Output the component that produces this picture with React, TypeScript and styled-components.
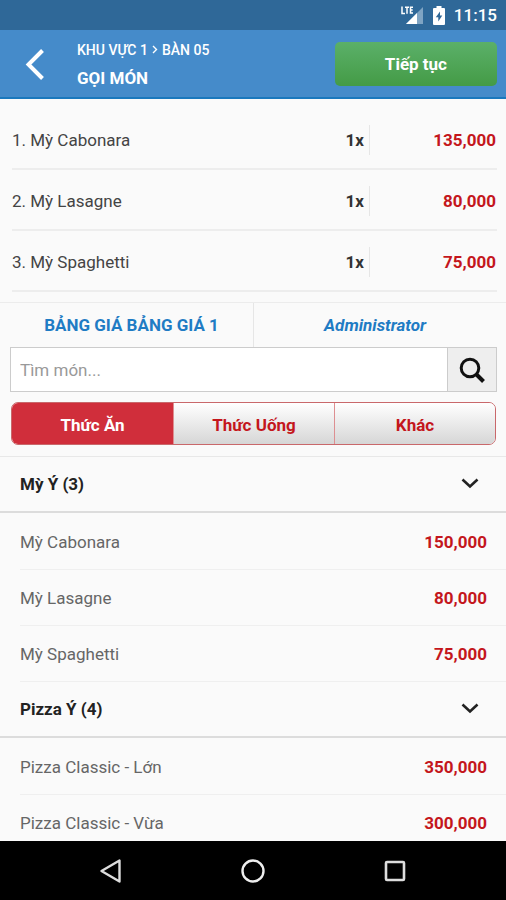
import React, { useState } from "react";
import styled, { createGlobalStyle } from "styled-components";

const GlobalStyle = createGlobalStyle`
  *, *::before, *::after { box-sizing: border-box; }
  body { margin: 0; background: #fafafa; }
  body, button, input { font-family: Roboto, "Noto Sans", sans-serif; }
  button { margin: 0; padding: 0; border: 0; background: none; cursor: pointer; }
  svg { display: block; }
`;

const Screen = styled.div`
  display: flex;
  flex-direction: column;
  height: 100vh;
  background: #fafafa;
  color: #333;
  font-size: 17px;
  line-height: 24px;
`;

const StatusBar = styled.div`
  flex: none;
  display: flex;
  align-items: center;
  justify-content: flex-end;
  height: 30px;
  padding: 0 9px;
  background: #2f6898;
  color: #fff;
`;

const StatusIcons = styled.div`
  display: flex;
  align-items: center;
  gap: 10px;
`;

const Clock = styled.time`
  margin-left: 9px;
  font-size: 17px;
  font-weight: 500;
  line-height: 30px;
`;

const Header = styled.header`
  flex: none;
  display: flex;
  align-items: center;
  height: 69px;
  padding: 0 9px 0 20px;
  background: #458bca;
  border-bottom: 2px solid #1a78bd;
  color: #fff;
`;

const BackButton = styled.button`
  width: 57px;
  color: #fff;
`;

const Titles = styled.div`
  flex: 1;
  padding-top: 4px;
  font-weight: 700;
`;

const Trail = styled.div`
  display: flex;
  align-items: center;
  gap: 4px;
  font-size: 14px;
  font-weight: 500;
  line-height: 24px;
`;

const Title = styled.h1`
  margin: 0;
  font-size: 17px;
  font-weight: 700;
  line-height: 32px;
`;

const ContinueButton = styled.button`
  width: 34%;
  height: 44px;
  border-radius: 5px;
  background: linear-gradient(#5bb069, #449b46);
  color: #fff;
  font-size: 17px;
  font-weight: 700;
`;

const OrderList = styled.ol`
  flex: none;
  margin: 0;
  padding: 10px 9px 10px 12px;
  list-style: none;
`;

const OrderRow = styled.li`
  display: flex;
  align-items: center;
  height: 61px;
  padding-top: 2px;
  border-bottom: 2px solid #ededed;
`;

const OrderName = styled.span`
  flex: 1;
  color: #444;
`;

const Quantity = styled.span`
  padding: 3px 5px 3px 0;
  border-right: 1px solid #e6e6e6;
  color: #333;
  font-weight: 700;
`;

const Price = styled.span<{ $column?: boolean }>`
  ${(p) => (p.$column ? "width: 127px; padding-right: 1px;" : "")}
  color: #c4161c;
  font-weight: 700;
  text-align: right;
`;

const Options = styled.div`
  flex: none;
  display: grid;
  grid-template-columns: 1fr 1fr;
  height: 45px;
  border-top: 1px solid #ececec;
`;

const Option = styled.button<{ $italic?: boolean }>`
  border-left: ${(p) => (p.$italic ? "1px solid #e6e6e6" : "0")};
  padding: ${(p) => (p.$italic ? "0 10px 0 0" : "0 0 0 10px")};
  color: #1f7cc4;
  font-size: 17px;
  font-style: ${(p) => (p.$italic ? "italic" : "normal")};
  font-weight: 700;
`;

const SearchBar = styled.form`
  flex: none;
  display: flex;
  height: 45px;
  margin: 0 9px 0 10px;
  border: 1px solid #ccc;
`;

const SearchInput = styled.input`
  flex: 1;
  min-width: 0;
  padding: 0 9px;
  border: 0;
  border-radius: 0;
  outline: 0;
  background: #fff;
  color: #333;
  font-size: 17px;
  &::placeholder { color: #999; opacity: 1; }
`;

const SearchButton = styled.button`
  display: grid;
  place-items: center;
  width: 49px;
  border-left: 1px solid #ccc;
  background: #eee;
  color: #111;
`;

const Segments = styled.div`
  flex: none;
  display: grid;
  grid-template-columns: repeat(3, 1fr);
  height: 43px;
  margin: 10px 10px 11px 11px;
  border: 1px solid #c9686b;
  border-radius: 7px;
  overflow: hidden;
`;

const Segment = styled.button<{ $active: boolean }>`
  padding-top: 2px;
  background: ${(p) => (p.$active ? "#d02e3b" : "linear-gradient(#fff, #d6d6d6)")};
  color: ${(p) => (p.$active ? "#fff" : "#c4161c")};
  font-size: 17px;
  font-weight: 700;
  & + & { border-left: 1px solid #dd8f91; }
`;

const Menu = styled.main`
  flex: 1;
  min-height: 0;
  overflow-y: auto;
  scrollbar-width: none;
  border-top: 1px solid #e8e8e8;
`;

const GroupTitle = styled.h2`
  margin: 0;
`;

const GroupButton = styled.button`
  display: flex;
  align-items: center;
  justify-content: space-between;
  width: 100%;
  height: 56px;
  padding: 0 27px 0 20px;
  border-bottom: 2px solid #dcdcdc;
  color: #222;
  font-size: 17px;
  font-weight: 700;
`;

const Dishes = styled.ul`
  margin: 0;
  padding: 1px 0 0;
  list-style: none;
`;

const Dish = styled.li`
  display: flex;
  align-items: center;
  justify-content: space-between;
  height: 56px;
  margin-left: 20px;
  padding-right: 19px;
  border-bottom: 1px solid #efefef;
  color: #666;
`;

const NavBar = styled.nav`
  flex: none;
  display: flex;
  align-items: center;
  justify-content: center;
  gap: 118px;
  height: 59px;
  background: #000;
`;

const NavButton = styled.button`
  width: 24px;
  height: 24px;
`;

const order = [
  { name: "Mỳ Cabonara", price: "135,000" },
  { name: "Mỳ Lasagne", price: "80,000" },
  { name: "Mỳ Spaghetti", price: "75,000" },
];

const groups = [
  {
    title: "Mỳ Ý (3)",
    dishes: [
      { name: "Mỳ Cabonara", price: "150,000" },
      { name: "Mỳ Lasagne", price: "80,000" },
      { name: "Mỳ Spaghetti", price: "75,000" },
    ],
  },
  {
    title: "Pizza Ý (4)",
    dishes: [
      { name: "Pizza Classic - Lớn", price: "350,000" },
      { name: "Pizza Classic - Vừa", price: "300,000" },
    ],
  },
];

const kinds = ["Thức Ăn", "Thức Uống", "Khác"];

function SignalIcon() {
  return (
    <svg width="22" height="20" viewBox="0 0 22 20" fill="none" aria-hidden="true">
      <path d="M22 2v17H5z" fill="#7fa4c3" />
      <path d="M16 8v11H5z" fill="#fff" />
      <path d="M1 1.500v7h3M4 2.200h4M6 2.200v6.500M12 2.200H9.500v5.800H12M9.500 5h2.200" stroke="#fff" strokeWidth="1.500" />
    </svg>
  );
}

function BatteryIcon() {
  return (
    <svg width="12" height="19" viewBox="0 0 12 19" aria-hidden="true">
      <path d="M3.500 0h5v2H11a1 1 0 0 1 1 1v15a1 1 0 0 1-1 1H1a1 1 0 0 1-1-1V3a1 1 0 0 1 1-1h2.500z" fill="#fff" />
      <path d="M7 5.500 2.800 11.200H5.300V15.500L9.300 9.600H7z" fill="#2f6898" />
    </svg>
  );
}

function Chevron() {
  return (
    <svg width="18" height="12" viewBox="0 0 18 12" fill="none" aria-hidden="true">
      <path d="m1.500 1.500 7.500 7 7.500-7" stroke="currentColor" strokeWidth="2.600" />
    </svg>
  );
}

export default function App() {
  const [kind, setKind] = useState(kinds[0]);
  const [closed, setClosed] = useState<string[]>([]);
  const [query, setQuery] = useState("");

  const toggle = (title: string) =>
    setClosed((c) => (c.includes(title) ? c.filter((t) => t !== title) : [...c, title]));

  return (
    <Screen>
      <GlobalStyle />
      <StatusBar>
        <StatusIcons>
          <SignalIcon />
          <BatteryIcon />
        </StatusIcons>
        <Clock>11:15</Clock>
      </StatusBar>
      <Header>
        <BackButton aria-label="Quay lại">
          <svg width="30" height="32" viewBox="0 0 30 32" fill="none" aria-hidden="true">
            <path d="M22.500 2.500 8.500 16.500l14 14" stroke="currentColor" strokeWidth="4" />
          </svg>
        </BackButton>
        <Titles>
          <Trail>
            KHU VỰC 1
            <svg width="6" height="9" viewBox="0 0 6 9" fill="none" aria-hidden="true">
              <path d="m1 1 3.500 3.500L1 8" stroke="currentColor" strokeWidth="1.400" />
            </svg>
            BÀN 05
          </Trail>
          <Title>GỌI MÓN</Title>
        </Titles>
        <ContinueButton>Tiếp tục</ContinueButton>
      </Header>
      <OrderList>
        {order.map((item, i) => (
          <OrderRow key={item.name}>
            <OrderName>{`${i + 1}. ${item.name}`}</OrderName>
            <Quantity>1x</Quantity>
            <Price $column>{item.price}</Price>
          </OrderRow>
        ))}
      </OrderList>
      <Options>
        <Option>BẢNG GIÁ BẢNG GIÁ 1</Option>
        <Option $italic>Administrator</Option>
      </Options>
      <SearchBar role="search" onSubmit={(e) => e.preventDefault()}>
        <SearchInput
          aria-label="Tìm món"
          placeholder="Tìm món..."
          value={query}
          onChange={(e) => setQuery(e.target.value)}
        />
        <SearchButton type="submit" aria-label="Tìm">
          <svg width="26" height="26" viewBox="0 0 26 26" fill="none" aria-hidden="true">
            <circle cx="11" cy="11" r="8.800" stroke="currentColor" strokeWidth="3" />
            <path d="m17 17 7.500 7.500" stroke="currentColor" strokeWidth="4" />
          </svg>
        </SearchButton>
      </SearchBar>
      <Segments role="group">
        {kinds.map((k) => (
          <Segment key={k} $active={k === kind} aria-pressed={k === kind} onClick={() => setKind(k)}>
            {k}
          </Segment>
        ))}
      </Segments>
      <Menu>
        {groups.map((group) => {
          const open = !closed.includes(group.title);
          return (
            <section key={group.title}>
              <GroupTitle>
                <GroupButton aria-expanded={open} onClick={() => toggle(group.title)}>
                  {group.title}
                  <Chevron />
                </GroupButton>
              </GroupTitle>
              {open && (
                <Dishes>
                  {group.dishes.map((dish) => (
                    <Dish key={dish.name}>
                      <span>{dish.name}</span>
                      <Price>{dish.price}</Price>
                    </Dish>
                  ))}
                </Dishes>
              )}
            </section>
          );
        })}
      </Menu>
      <NavBar>
        <NavButton aria-label="Trở về">
          <svg width="24" height="24" viewBox="0 0 24 24" fill="none" aria-hidden="true">
            <path d="M20.500 1.500v21L2.500 12z" stroke="#ddd" strokeWidth="2.400" strokeLinejoin="round" />
          </svg>
        </NavButton>
        <NavButton aria-label="Màn hình chính">
          <svg width="24" height="24" viewBox="0 0 24 24" fill="none" aria-hidden="true">
            <circle cx="12" cy="12" r="10.500" stroke="#eee" strokeWidth="2.400" />
          </svg>
        </NavButton>
        <NavButton aria-label="Gần đây">
          <svg width="24" height="24" viewBox="0 0 24 24" fill="none" aria-hidden="true">
            <rect x="3" y="3" width="18" height="18" rx="1" stroke="#ddd" strokeWidth="2.600" />
          </svg>
        </NavButton>
      </NavBar>
    </Screen>
  );
}
